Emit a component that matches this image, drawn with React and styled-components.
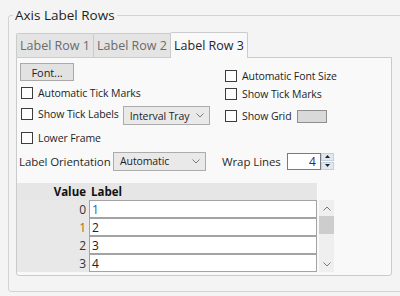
import React from "react";
import styled, { createGlobalStyle } from "styled-components";

const GlobalStyle = createGlobalStyle`
  html, body {
    margin: 0;
    padding: 0;
    background: #f4f4f4;
    overflow: hidden;
  }
  body {
    font-family: "Open Sans", "Noto Sans", sans-serif;
    font-size: 10.5px;
    letter-spacing: -0.1px;
    color: #1e1e1e;
  }
`;

const Group = styled.fieldset`
  margin: 6px 0 0 8px;
  padding: 0 20px 15px 7px;
  width: 420px;
  border: 1px solid #d3d3d3;
  border-radius: 3px;
  box-sizing: border-box;
`;

const Legend = styled.legend`
  margin-left: -3px;
  padding: 0 2px;
  font-size: 13.5px;
  letter-spacing: 0;
  line-height: 18px;
  color: #1e1e1e;
`;

const TabStrip = styled.div`
  display: flex;
  align-items: flex-end;
  margin-top: 8px;
`;

const Tab = styled.div`
  width: 78px;
  height: ${(p) => (p.$active ? "26px" : "24px")};
  margin-right: -1px;
  margin-bottom: ${(p) => (p.$active ? "-1px" : "0")};
  box-sizing: border-box;
  border: 1px solid #cbcbcb;
  border-bottom: none;
  border-radius: 2px 2px 0 0;
  background: ${(p) => (p.$active ? "#f9f9f9" : "#e4e4e4")};
  color: ${(p) => (p.$active ? "#2b2233" : "#6b6b6b")};
  font-size: 12.5px;
  letter-spacing: 0;
  display: flex;
  align-items: center;
  justify-content: center;
  position: relative;
  z-index: ${(p) => (p.$active ? 1 : 0)};
`;

const Panel = styled.div`
  width: 376px;
  height: 219px;
  box-sizing: border-box;
  border: 1px solid #cbcbcb;
  border-radius: 0 0 3px 3px;
  background: #f9f9f9;
  padding-top: 5px;
`;

const Options = styled.div`
  display: flex;
`;

const Column = styled.div`
  display: flex;
  flex-direction: column;
  width: ${(p) => (p.$left ? "208px" : "auto")};
  padding-left: ${(p) => (p.$left ? "3px" : "0")};
  box-sizing: border-box;
`;

const Button = styled.div`
  width: 54px;
  height: 18px;
  box-sizing: border-box;
  border: 1px solid #a9a9a9;
  background: #e2e2e2;
  display: flex;
  align-items: center;
  justify-content: center;
  font-size: 11px;
`;

const Line = styled.label`
  display: flex;
  align-items: center;
  height: ${(p) => p.$h ?? 20}px;
  margin-top: ${(p) => p.$mt ?? 0}px;
  margin-left: ${(p) => p.$ml ?? 0}px;
  white-space: nowrap;
`;

const Box = styled.span`
  width: 12px;
  height: 12px;
  box-sizing: border-box;
  border: 1px solid #3c3c3c;
  background: #fdfdfd;
  margin-right: 5px;
  flex: none;
`;

const Select = styled.div`
  width: ${(p) => p.$w}px;
  height: 19px;
  margin-left: ${(p) => p.$ml ?? 4}px;
  margin-top: ${(p) => p.$mt ?? 0}px;
  box-sizing: border-box;
  border: 1px solid #acacac;
  background: #e9e9e9;
  display: flex;
  align-items: center;
  justify-content: space-between;
  padding: 0 5px 0 6px;
  white-space: nowrap;
  flex: none;
  svg {
    flex: none;
  }
`;

const Swatch = styled.span`
  width: 30px;
  height: 13px;
  margin-left: 6px;
  box-sizing: border-box;
  border: 1px solid #8e8e8e;
  background: #d9d9d9;
`;

const OrientRow = styled.div`
  display: flex;
  align-items: center;
  height: 22px;
  margin-top: 1px;
  padding-left: 2px;
`;

const Caption = styled.span`
  width: ${(p) => (p.$w ? `${p.$w}px` : "auto")};
  margin-left: ${(p) => p.$ml ?? 0}px;
  color: #2a2a2a;
  white-space: nowrap;
  font-size: 11.5px;
  flex: none;
`;

const NumberBox = styled.div`
  width: 34px;
  height: 17px;
  margin-left: 6px;
  box-sizing: border-box;
  border: 1px solid #7a7a7a;
  background: #fff;
  text-align: right;
  padding-right: 4px;
  line-height: 15px;
  font-size: 12px;
  color: #2f2a6b;
`;

const Spinner = styled.div`
  display: flex;
  flex-direction: column;
  width: 13px;
  height: 17px;
  gap: 1px;
`;

const SpinBtn = styled.div`
  flex: 1;
  background: #dfe7ef;
  border: 1px solid #c3d0dc;
  box-sizing: border-box;
  display: flex;
  align-items: center;
  justify-content: center;
`;

const TableWrap = styled.div`
  display: flex;
  margin-top: 11px;
`;

const Grid = styled.div`
  display: grid;
  grid-template-columns: 72px 228px;
  grid-auto-rows: 18px;
  grid-template-rows: 17px;
`;

const Head = styled.div`
  background: #e6e6e6;
  font-weight: 700;
  font-size: 11.5px;
  letter-spacing: 0;
  display: flex;
  align-items: center;
  justify-content: ${(p) => (p.$right ? "flex-end" : "flex-start")};
  padding: ${(p) => (p.$right ? "0 3px 0 0" : "0 0 0 2px")};
  color: #111;
`;

const ValueCell = styled.div`
  background: #e8e8e8;
  display: flex;
  align-items: center;
  justify-content: flex-end;
  padding-right: 3px;
  color: ${(p) => p.$color || "#333"};
  font-size: 12px;
`;

const LabelCell = styled.div`
  background: #fff;
  border: 1px solid #a3a3a3;
  box-sizing: border-box;
  display: flex;
  align-items: center;
  padding-left: 2px;
  color: ${(p) => p.$color || "#222"};
  font-size: 12px;
`;

const Scroll = styled.div`
  width: 15px;
  height: 72px;
  margin: 17px 0 0 2px;
  background: #efefef;
  display: flex;
  flex-direction: column;
  align-items: center;
`;

const Arrow = styled.div`
  height: 16px;
  display: flex;
  align-items: center;
  justify-content: center;
`;

const Thumb = styled.div`
  width: 15px;
  height: 18px;
  background: #cdcdcd;
`;

const Spacer = styled.div`
  flex: 1;
`;

const Chevron = ({ up }) => (
  <svg width="8" height="5" viewBox="0 0 8 5">
    <path
      d={up ? "M0.5 4.5 L4 1 L7.5 4.5" : "M0.5 0.5 L4 4 L7.5 0.5"}
      fill="none"
      stroke="#7a7a7a"
      strokeWidth="1"
    />
  </svg>
);

const Tri = ({ up }) => (
  <svg width="5" height="3" viewBox="0 0 5 3">
    <path d={up ? "M0 3 L2.5 0 L5 3 Z" : "M0 0 L2.5 3 L5 0 Z"} fill="#222" />
  </svg>
);

const Check = ({ children, ...rest }) => (
  <Line {...rest}>
    <Box />
    {children}
  </Line>
);

const rows = [
  { v: "0", l: "1", vc: "#333", lc: "#1f5fae" },
  { v: "1", l: "2", vc: "#b06a17", lc: "#222" },
  { v: "2", l: "3", vc: "#333", lc: "#222" },
  { v: "3", l: "4", vc: "#333", lc: "#222" },
];

const App = () => {
  return (
    <>
      <GlobalStyle />
      <Group>
        <Legend>Axis Label Rows</Legend>
        <TabStrip>
          <Tab>Label Row 1</Tab>
          <Tab>Label Row 2</Tab>
          <Tab $active>Label Row 3</Tab>
        </TabStrip>
        <Panel>
          <Options>
            <Column $left>
              <Button>Font...</Button>
              <Check $mt={2} $h={20} $ml={1}>Automatic Tick Marks</Check>
              <Check $h={22} $ml={1}>
                Show Tick Labels
                <Select $w={87} $mt={3}>
                  Interval Tray <Chevron />
                </Select>
              </Check>
              <Check $mt={2} $h={22} $ml={1}>Lower Frame</Check>
            </Column>
            <Column>
              <Check $mt={4} $h={18}>Automatic Font Size</Check>
              <Check $h={18}>Show Tick Marks</Check>
              <Check $mt={2} $h={22}>
                Show Grid
                <Swatch />
              </Check>
            </Column>
          </Options>
          <OrientRow>
            <Caption $w={94}>Label Orientation</Caption>
            <Select $w={93} $ml={0}>
              Automatic <Chevron />
            </Select>
            <Caption $ml={16}>Wrap Lines</Caption>
            <NumberBox>4</NumberBox>
            <Spinner>
              <SpinBtn>
                <Tri up />
              </SpinBtn>
              <SpinBtn>
                <Tri />
              </SpinBtn>
            </Spinner>
          </OrientRow>
          <TableWrap>
            <Grid>
              <Head $right>Value</Head>
              <Head>Label</Head>
              {rows.map((r) => (
                <React.Fragment key={r.v}>
                  <ValueCell $color={r.vc}>{r.v}</ValueCell>
                  <LabelCell $color={r.lc}>{r.l}</LabelCell>
                </React.Fragment>
              ))}
            </Grid>
            <Scroll>
              <Arrow>
                <Chevron up />
              </Arrow>
              <Thumb />
              <Spacer />
              <Arrow>
                <Chevron />
              </Arrow>
            </Scroll>
          </TableWrap>
        </Panel>
      </Group>
    </>
  );
};

export default App;
